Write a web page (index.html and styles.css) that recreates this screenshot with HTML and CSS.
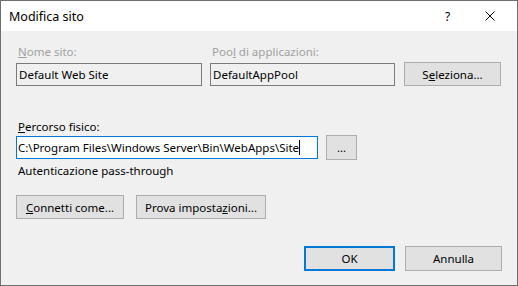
FILE: index.html
```html
<!DOCTYPE html>
<html lang="it">
<head>
    <meta charset="UTF-8">
    <title>Modifica sito</title>
    <link rel="stylesheet" href="styles.css">
</head>
<body>
    <div class="dialog">
        <div class="titlebar">
            <span class="title">Modifica sito</span>
            <span class="caption-btn help">?</span>
            <span class="caption-btn close">
                <svg width="10" height="10" viewBox="0 0 10 10">
                    <path d="M0.5 0.5 L9.5 9.5 M9.5 0.5 L0.5 9.5" stroke="#000" stroke-width="1" fill="none"/>
                </svg>
            </span>
        </div>
        <div class="content">
            <div class="site-row">
                <div class="field name-field">
                    <label class="disabled"><u>N</u>ome sito:</label>
                    <div class="textbox readonly">Default Web Site</div>
                </div>
                <div class="field pool-field">
                    <label class="disabled">Poo<u>l</u> di applicazioni:</label>
                    <div class="textbox readonly">DefaultAppPool</div>
                </div>
                <button class="btn select-btn">S<u>e</u>leziona...</button>
            </div>

            <label class="path-label"><u>P</u>ercorso fisico:</label>
            <div class="path-row">
                <div class="textbox focused">C:\Program Files\Windows Server\Bin\WebApps\Site<span class="caret"></span></div>
                <button class="btn browse-btn">...</button>
            </div>
            <div class="auth-text">Autenticazione pass-through</div>

            <div class="action-row">
                <button class="btn connect-btn"><u>C</u>onnetti come...</button>
                <button class="btn test-btn">Prova imposta<u>z</u>ioni...</button>
            </div>
        </div>
        <div class="footer">
            <button class="btn ok-btn">OK</button>
            <button class="btn cancel-btn">Annulla</button>
        </div>
    </div>
</body>
</html>
```

FILE: styles.css
```css
body {
    margin: 0;
    font-family: "Noto Sans", "Liberation Sans", sans-serif;
    font-size: 11.5px;
    color: #000;
}
.dialog {
    width: 518px;
    height: 286px;
    box-sizing: border-box;
    border: 1px solid #6f6f6f;
    background: #f0f0f0;
    display: flex;
    flex-direction: column;
}
.titlebar {
    height: 30px;
    background: #fff;
    display: flex;
    align-items: center;
    padding-left: 8px;
    padding-right: 8px;
}
.title {
    font-size: 12.5px;
    flex: 1;
}
.caption-btn {
    width: 39px;
    height: 30px;
    display: flex;
    align-items: center;
    justify-content: center;
}
.help {
    font-size: 12px;
    padding-right: 3px;
}
.content {
    padding: 13px 0 0 15px;
    display: flex;
    flex-direction: column;
}
label {
    display: block;
    height: 16px;
    line-height: 16px;
    padding-left: 2px;
}
label.disabled {
    color: #a0a0a0;
}
.site-row {
    display: flex;
    align-items: flex-end;
}
.field {
    display: flex;
    flex-direction: column;
    gap: 3px;
}
.name-field {
    width: 186px;
    margin-right: 8px;
}
.pool-field {
    width: 185px;
    margin-right: 9px;
}
.textbox {
    height: 23px;
    box-sizing: border-box;
    border: 1px solid #7a7a7a;
    padding-left: 2px;
    line-height: 21px;
    white-space: nowrap;
    overflow: hidden;
}
.textbox.readonly {
    background: #f0f0f0;
}
.textbox.focused {
    width: 302px;
    background: #fff;
    border-color: #0078d7;
    padding-left: 1px;
}
.caret {
    display: inline-block;
    width: 1px;
    height: 15px;
    background: #000;
    vertical-align: -3px;
}
.btn {
    font-family: inherit;
    font-size: 11.5px;
    color: #000;
    background: #e1e1e1;
    border: 1px solid #adadad;
    height: 24px;
    padding: 0;
    box-sizing: border-box;
}
.select-btn {
    width: 97px;
}
.path-label {
    margin-top: 33px;
}
.path-row {
    display: flex;
    align-items: center;
    gap: 8px;
}
.browse-btn {
    width: 31px;
    height: 25px;
}
.auth-text {
    margin-top: 3px;
    padding-left: 2px;
    line-height: 16px;
}
.action-row {
    display: flex;
    gap: 12px;
    margin-top: 16px;
}
.connect-btn {
    width: 108px;
}
.test-btn {
    width: 130px;
}
.footer {
    margin-top: auto;
    display: flex;
    justify-content: flex-end;
    gap: 10px;
    padding: 0 15px 14px 0;
}
.ok-btn, .cancel-btn {
    height: 25px;
}
.ok-btn {
    width: 91px;
    border: 2px solid #0078d7;
}
.cancel-btn {
    width: 97px;
}
```
